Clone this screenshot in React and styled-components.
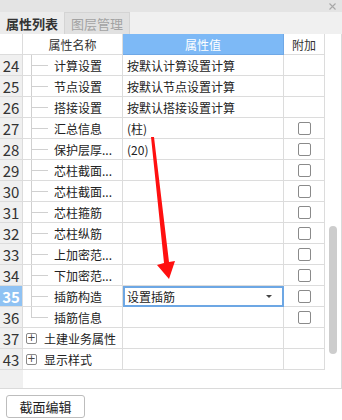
import React from 'react'
import styled, { createGlobalStyle } from 'styled-components'

const GlobalStyle = createGlobalStyle`
  html, body {
    margin: 0;
    padding: 0;
    background: #ffffff;
  }
  body {
    font-family: "Noto Sans CJK SC", "Noto Sans", sans-serif;
    color: #222;
  }
`

const Window = styled.div`
  position: relative;
  width: 342px;
  height: 420px;
  background: #fff;
  overflow: hidden;
`

const TitleStrip = styled.div`
  height: 12px;
  background: #e4e4e4;
  display: flex;
  justify-content: flex-end;
  align-items: center;
  padding-right: 6px;
`

const TabBar = styled.div`
  height: 22px;
  display: flex;
  background: #f0f0f0;
`

const Tab = styled.div`
  width: ${(p) => p.$w}px;
  height: 22px;
  box-sizing: border-box;
  display: flex;
  align-items: center;
  justify-content: center;
  font-size: 13px;
  font-weight: ${(p) => (p.$active ? 700 : 400)};
  color: ${(p) => (p.$active ? '#333' : '#a3a3a3')};
  background: ${(p) => (p.$active ? '#ececec' : '#e1e1e1')};
  border-right: 1px solid #d4d4d4;
  border-top: ${(p) => (p.$active ? 'none' : '1px solid #d4d4d4')};
`

const Panel = styled.div`
  display: flex;
  height: 355px;
  border-right: 1px solid #dadada;
  border-bottom: 1px solid #dadada;
  box-sizing: border-box;
`

const Table = styled.div`
  width: 325px;
  display: flex;
  flex-direction: column;
`

const Row = styled.div`
  display: grid;
  grid-template-columns: 23px 100px 161px 41px;
  height: 21px;
`

const Cell = styled.div`
  box-sizing: border-box;
  height: 21px;
  border-right: 1px solid #dcdcdc;
  border-bottom: 1px solid #dcdcdc;
  display: flex;
  align-items: center;
  font-size: 12px;
  white-space: nowrap;
  overflow: hidden;
`

const NumCell = styled(Cell)`
  justify-content: center;
  font-size: 15px;
  background: ${(p) => (p.$sel ? '#8fc2f3' : p.$head ? '#fff' : '#f0f0f0')};
  color: ${(p) => (p.$sel ? '#fff' : '#333')};
  font-weight: ${(p) => (p.$sel ? 700 : 400)};
`

const HeadCell = styled(Cell)`
  justify-content: center;
  color: ${(p) => (p.$active ? '#fff' : '#333')};
  background: ${(p) => (p.$active ? '#7db9f6' : '#fff')};
  border-color: ${(p) => (p.$active ? '#6fa8e6' : '#dcdcdc')};
`

const NameCell = styled(Cell)`
  position: relative;
  padding-left: 31px;
`

const TreeV = styled.span`
  position: absolute;
  left: 8px;
  top: 0;
  width: 1px;
  height: ${(p) => (p.$last ? '10px' : '21px')};
  background: #d0d0d0;
`

const TreeH = styled.span`
  position: absolute;
  left: 8px;
  top: 10px;
  width: 17px;
  height: 1px;
  background: #d0d0d0;
`

const GroupCell = styled(Cell)`
  padding-left: 3px;
  gap: 7px;
`

const PlusBox = styled.span`
  width: 11px;
  height: 11px;
  box-sizing: border-box;
  border: 1px solid #8a8a8a;
  border-radius: 2px;
  display: flex;
  align-items: center;
  justify-content: center;
  font-size: 10px;
  line-height: 1;
  color: #444;
  font-family: "DejaVu Sans", sans-serif;
`

const ValueCell = styled(Cell)`
  padding-left: ${(p) => (p.$edit ? '2px' : '4px')};
  border: ${(p) => (p.$edit ? '2px solid #6da7e4' : undefined)};
  justify-content: space-between;
  padding-right: 10px;
`

const Caret = styled.span`
  width: 0;
  height: 0;
  border-left: 3px solid transparent;
  border-right: 3px solid transparent;
  border-top: 3px solid #444;
`

const CheckCell = styled(Cell)`
  justify-content: center;
`

const Box = styled.span`
  width: 13px;
  height: 13px;
  box-sizing: border-box;
  border: 1px solid #8a8a8a;
  border-radius: 2px;
  background: #fff;
`

const Filler = styled.div`
  flex: 1;
  display: flex;
`

const FillerNum = styled.div`
  width: 23px;
  background: #f0f0f0;
`

const ScrollCol = styled.div`
  flex: 1;
  display: flex;
  flex-direction: column;
  align-items: center;
  padding-top: 192px;
`

const Thumb = styled.div`
  width: 8px;
  height: 128px;
  border-radius: 4px;
  background: #cdcdcd;
`

const Footer = styled.div`
  padding: 4px 6px;
`

const Button = styled.button`
  width: 79px;
  height: 23px;
  border: 1px solid #bdbdbd;
  border-radius: 3px;
  background: #fff;
  font-family: "Noto Sans CJK SC", sans-serif;
  font-size: 13px;
  color: #222;
  padding: 0;
`

const Arrow = styled.svg`
  position: absolute;
  left: 0;
  top: 0;
  pointer-events: none;
`

const rows = [
  { n: 24, name: '计算设置', value: '按默认计算设置计算', check: false },
  { n: 25, name: '节点设置', value: '按默认节点设置计算', check: false },
  { n: 26, name: '搭接设置', value: '按默认搭接设置计算', check: false },
  { n: 27, name: '汇总信息', value: '(柱)', check: true },
  { n: 28, name: '保护层厚...', value: '(20)', check: true },
  { n: 29, name: '芯柱截面...', value: '', check: true },
  { n: 30, name: '芯柱截面...', value: '', check: true },
  { n: 31, name: '芯柱箍筋', value: '', check: true },
  { n: 32, name: '芯柱纵筋', value: '', check: true },
  { n: 33, name: '上加密范...', value: '', check: true },
  { n: 34, name: '下加密范...', value: '', check: true },
  { n: 35, name: '插筋构造', value: '设置插筋', check: true, sel: true },
  { n: 36, name: '插筋信息', value: '', check: true, last: true },
]

const groups = [
  { n: 37, name: '土建业务属性' },
  { n: 43, name: '显示样式' },
]

export default function App() {
  return (
    <Window>
      <GlobalStyle />
      <TitleStrip>
        <svg width="7" height="7" viewBox="0 0 7 7">
          <path d="M0.5 0.5 L6.5 6.5 M6.5 0.5 L0.5 6.5" stroke="#a8a8a8" strokeWidth="1.1" />
        </svg>
      </TitleStrip>
      <TabBar>
        <Tab $active $w={65}>属性列表</Tab>
        <Tab $w={65}>图层管理</Tab>
      </TabBar>
      <Panel>
        <Table>
          <Row>
            <NumCell $head />
            <HeadCell>属性名称</HeadCell>
            <HeadCell $active>属性值</HeadCell>
            <HeadCell>附加</HeadCell>
          </Row>
          {rows.map((r) => (
            <Row key={r.n}>
              <NumCell $sel={r.sel}>{r.n}</NumCell>
              <NameCell>
                <TreeV $last={r.last} />
                <TreeH />
                {r.name}
              </NameCell>
              <ValueCell $edit={r.sel}>
                <span>{r.value}</span>
                {r.sel && <Caret />}
              </ValueCell>
              <CheckCell>{r.check && <Box />}</CheckCell>
            </Row>
          ))}
          {groups.map((g) => (
            <Row key={g.n}>
              <NumCell>{g.n}</NumCell>
              <GroupCell>
                <PlusBox>+</PlusBox>
                {g.name}
              </GroupCell>
              <ValueCell />
              <CheckCell />
            </Row>
          ))}
          <Filler>
            <FillerNum />
          </Filler>
        </Table>
        <ScrollCol>
          <Thumb />
        </ScrollCol>
      </Panel>
      <Footer>
        <Button>截面编辑</Button>
      </Footer>
      <Arrow width="342" height="420" viewBox="0 0 342 420">
        <polygon
          points="151,137 154,137 169,262 175,261 169,279 157,265 164,263"
          fill="#ff1010"
        />
      </Arrow>
    </Window>
  )
}
